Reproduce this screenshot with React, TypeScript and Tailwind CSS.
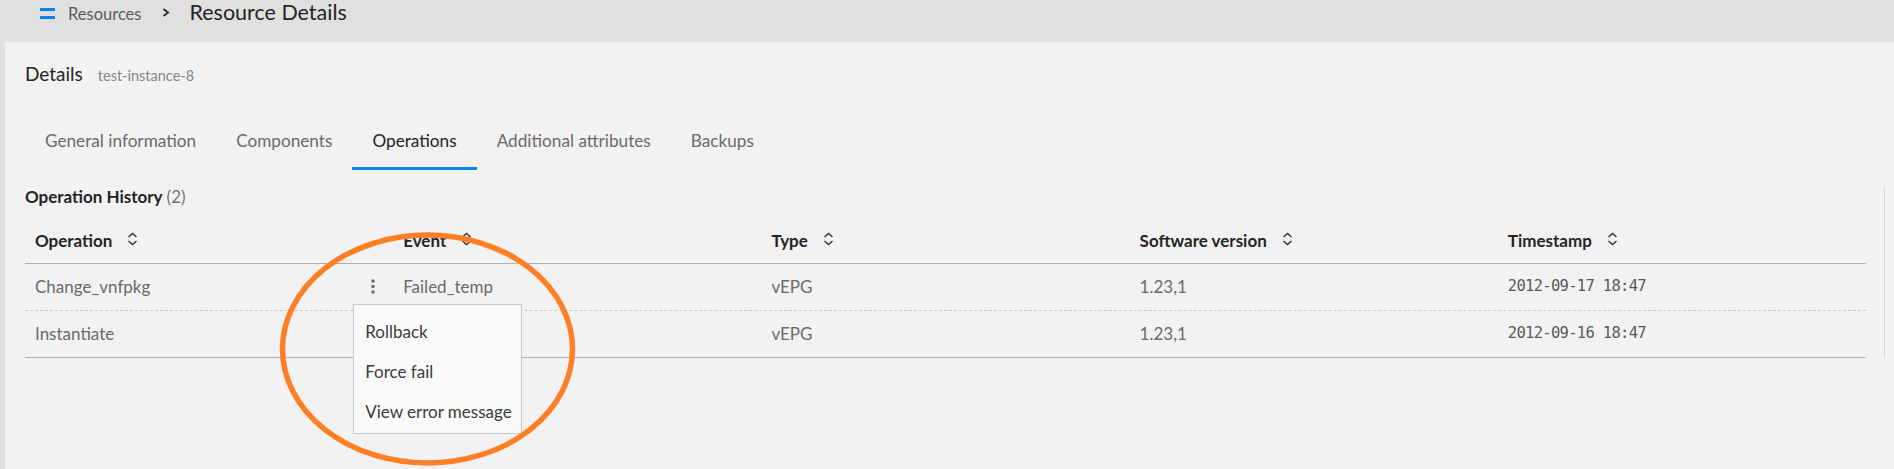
import React from "react"

const font = { fontFamily: "Lato, 'Noto Sans', sans-serif" }

function SortIcon() {
  return (
    <svg width="11" height="14" viewBox="0 0 11 14" fill="none" stroke="#333333" strokeWidth="1.4" className="mb-[4px] shrink-0">
      <path d="M1.5 5 L5.5 1.5 L9.5 5" />
      <path d="M1.5 9 L5.5 12.5 L9.5 9" />
    </svg>
  )
}

function Kebab() {
  return (
    <svg width="4" height="15" viewBox="0 0 4 15" fill="#6e6e6e">
      <circle cx="2" cy="2" r="1.8" />
      <circle cx="2" cy="7.5" r="1.8" />
      <circle cx="2" cy="13" r="1.8" />
    </svg>
  )
}

const tabs = ["General information", "Components", "Operations", "Additional attributes", "Backups"]
const columns = ["Operation", "Event", "Type", "Software version", "Timestamp"]
const rows = [
  { operation: "Change_vnfpkg", event: "Failed_temp", type: "vEPG", version: "1.23,1", time: "2012-09-17 18:47", menu: true },
  { operation: "Instantiate", event: "", type: "vEPG", version: "1.23,1", time: "2012-09-16 18:47", menu: false },
]

export default function App() {
  return (
    <div className="relative h-[469px] w-full overflow-hidden bg-[#e0e0e0]" style={font}>
      {/* Top bar */}
      <div className="flex h-[42px] items-start pl-[40px]">
        <svg width="15" height="11" viewBox="0 0 15 11" fill="#0b84f0" className="mt-[8px] shrink-0">
          <rect x="0" y="0" width="15" height="3" />
          <rect x="0" y="8" width="15" height="3" />
        </svg>
        <span className="ml-[13px] mt-[4px] text-[16.5px] leading-[20px] text-[#5c5c5c]">Resources</span>
        <svg width="8" height="9" viewBox="0 0 8 9" fill="none" stroke="#333333" strokeWidth="2" className="ml-[21px] mt-[8px] shrink-0">
          <path d="M1.5 1 L6 4.5 L1.5 8" />
        </svg>
        <span className="ml-[19px] mt-[1px] text-[21.5px] leading-[22px] text-[#242424]">Resource Details</span>
      </div>

      {/* Panel */}
      <div className="ml-[5px] h-[427px] bg-[#f2f2f2] pl-[20px] pr-[9px] pt-[20px]">
        <div className="flex items-baseline">
          <span className="text-[19px] leading-[24px] text-[#242424]">Details</span>
          <span className="ml-[15px] text-[14.5px] text-[#878787]">test-instance-8</span>
        </div>

        <div className="mt-[28px] flex">
          {tabs.map((t) => (
            <div
              key={t}
              className={`flex h-[55px] items-center border-b-[3px] px-5 text-[17.2px] leading-[20px] ${
                t === "Operations" ? "border-[#0b84f0] text-[#242424]" : "border-transparent text-[#6b6b6b]"
              }`}
            >
              {t}
            </div>
          ))}
        </div>

        <div className="mt-[17px] border-r border-[#d4d4d4] pr-[18px]">
          <div className="text-[17px] leading-[20px]">
            <span className="font-bold text-[#242424]">Operation History</span>
            <span className="ml-1 text-[#767676]">(2)</span>
          </div>

          <div className="mt-3">
            <div className="grid h-[45px] grid-cols-5 border-b border-[#b2b2b2]">
              {columns.map((c) => (
                <div key={c} className="flex items-center gap-[15px] pl-[10px] text-[17px] font-bold text-[#242424]">
                  <span>{c}</span>
                  <SortIcon />
                </div>
              ))}
            </div>
            {rows.map((r, i) => (
              <div
                key={r.operation}
                className={`grid h-[47px] grid-cols-5 border-b text-[17px] text-[#6a6a6a] ${
                  i === rows.length - 1 ? "border-solid border-[#b2b2b2]" : "border-dashed border-[#c8c8c8]"
                }`}
              >
                <div className="flex items-center justify-between pl-[10px] pr-[18px]">
                  <span>{r.operation}</span>
                  {r.menu && (
                    <div className="relative flex h-[15px] w-[4px]">
                      <Kebab />
                      <div className="absolute left-[-18px] top-[25px] z-10 w-[169px] border border-[#c8c8c8] bg-[#fafafa] pb-[2px] pt-[6px] text-[17px] text-[#3c3c3c]">
                        {["Rollback", "Force fail", "View error message"].map((m) => (
                          <div key={m} className="flex h-[40px] items-center whitespace-nowrap px-[11px]">
                            {m}
                          </div>
                        ))}
                      </div>
                    </div>
                  )}
                </div>
                <div className="flex items-center pl-[10px]">{r.event}</div>
                <div className="flex items-center pl-[10px]">{r.type}</div>
                <div className="flex items-center pl-[10px]">{r.version}</div>
                <div
                  className="flex items-center pl-[10px] text-[15.5px] tracking-[-0.7px] text-[#5a5a5a]"
                  style={{ fontFamily: "'DejaVu Sans Mono', monospace" }}
                >
                  {r.time}
                </div>
              </div>
            ))}
          </div>
        </div>
      </div>

      {/* Annotation ellipse */}
      <svg className="pointer-events-none absolute left-0 top-0 z-20" width="1894" height="469" viewBox="0 0 1894 469" fill="none">
        <ellipse cx="427.5" cy="349" rx="145" ry="114" stroke="#ff7f27" strokeWidth="5.5" />
      </svg>
    </div>
  )
}
